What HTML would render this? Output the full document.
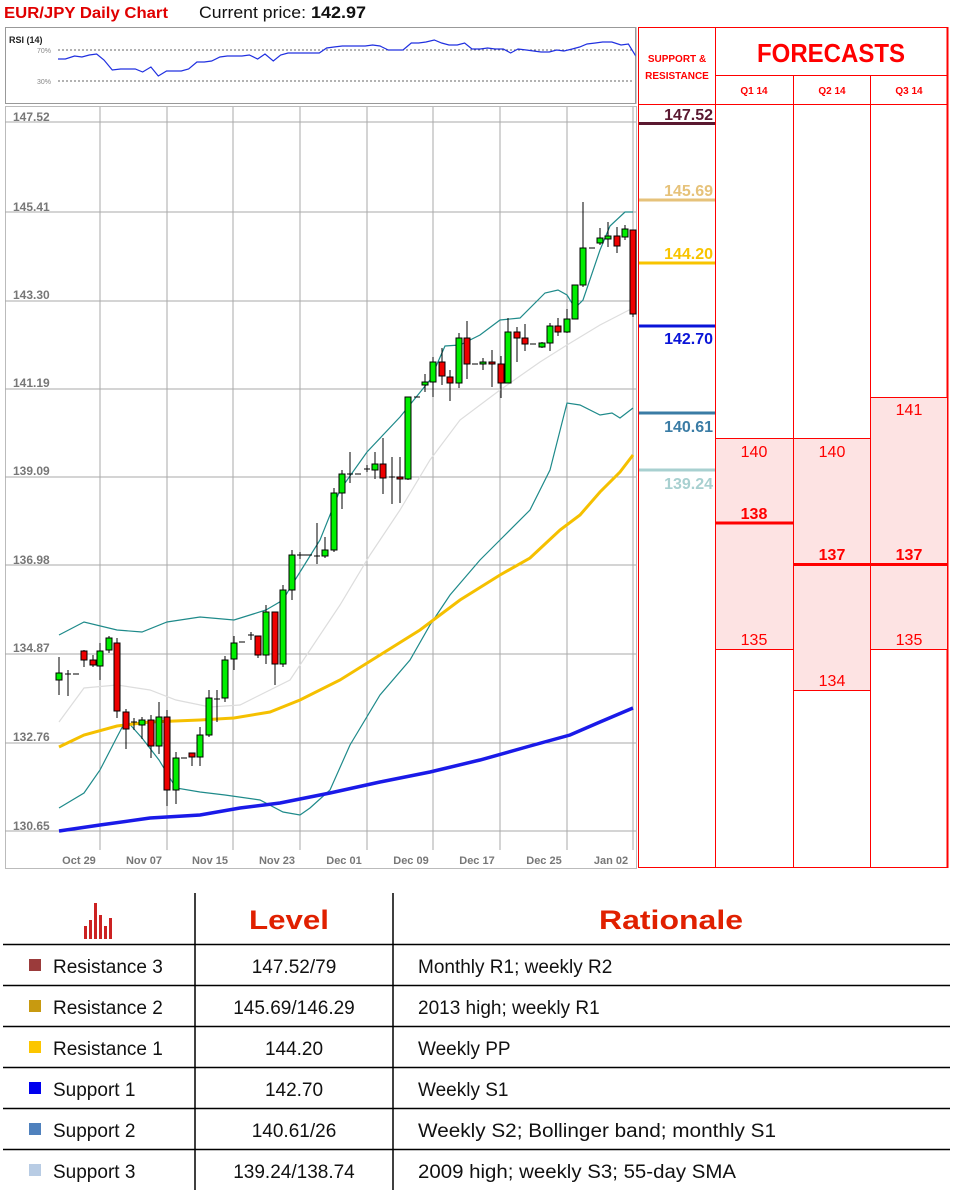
<!DOCTYPE html>
<html><head><meta charset="utf-8"><style>
html,body{margin:0;padding:0;background:#fff;width:954px;height:1193px;overflow:hidden}
svg{display:block}
text{font-family:"Liberation Sans",sans-serif}
</style></head><body>
<svg width="954" height="1193" viewBox="0 0 954 1193" xmlns="http://www.w3.org/2000/svg">
<text x="4" y="18" font-size="16" font-weight="bold" fill="#e00000" textLength="164" lengthAdjust="spacingAndGlyphs">EUR/JPY Daily Chart</text>
<text x="199" y="18" font-size="17" fill="#111" textLength="107" lengthAdjust="spacingAndGlyphs">Current price:</text>
<text x="311" y="18" font-size="17" font-weight="bold" fill="#111" textLength="55" lengthAdjust="spacingAndGlyphs">142.97</text>

<!-- RSI -->
<rect x="5.5" y="27.5" width="630" height="76" fill="#fff" stroke="#999"/>
<text x="9" y="43" font-size="9" font-weight="bold" fill="#222">RSI (14)</text>
<text x="37" y="53" font-size="7" fill="#888">70%</text>
<text x="37" y="84" font-size="7" fill="#888">30%</text>
<line x1="58" y1="50" x2="634" y2="50" stroke="#666" stroke-dasharray="2,2"/>
<line x1="58" y1="81" x2="634" y2="81" stroke="#666" stroke-dasharray="2,2"/>
<g transform="translate(4.64,0) scale(0.92,1)">
<polyline fill="none" stroke="#2030e0" stroke-width="1.2" vector-effect="non-scaling-stroke" points="58,59 66,59 76,56 84,57 92,55 100,54 108,60 117,70 126,69 134,69 142,69 150,72 159,67 167,76 176,71 184,71 192,71 200,69 209,62 217,62 225,61 234,57 242,56 251,56 258,56 266,55 275,59 283,54 292,61 300,55 308,53 317,53 325,53 334,53 342,53 350,48 358,47 367,46 375,46 383,46 392,46 400,45 408,46 417,50 425,50 433,50 442,43 450,43 458,42 467,40 475,43 483,45 492,45 500,43 508,49 517,49 525,48 533,49 542,49 550,53 558,49 567,50 575,51 583,52 592,52 600,50 608,51 617,49 625,47 633,44 642,43 650,42 660,42 670,45 678,44 686,56"/>
</g>
<line x1="636" y1="27" x2="636" y2="104" stroke="#999"/>

<!-- main chart -->
<rect x="5.5" y="106.5" width="631" height="762" fill="#fff" stroke="#bbb"/>
<g stroke="#aaa" stroke-width="1">
<line x1="100" y1="107" x2="100" y2="850"/><line x1="167" y1="107" x2="167" y2="850"/><line x1="233" y1="107" x2="233" y2="850"/><line x1="300" y1="107" x2="300" y2="850"/><line x1="367" y1="107" x2="367" y2="850"/><line x1="433" y1="107" x2="433" y2="850"/><line x1="500" y1="107" x2="500" y2="850"/><line x1="567" y1="107" x2="567" y2="850"/><line x1="633" y1="107" x2="633" y2="850"/>
<line x1="5" y1="122" x2="636" y2="122"/><line x1="5" y1="212" x2="636" y2="212"/><line x1="5" y1="301" x2="636" y2="301"/><line x1="5" y1="389" x2="636" y2="389"/><line x1="5" y1="477" x2="636" y2="477"/><line x1="5" y1="565" x2="636" y2="565"/><line x1="5" y1="654" x2="636" y2="654"/><line x1="5" y1="743" x2="636" y2="743"/><line x1="5" y1="831" x2="636" y2="831"/>
</g>
<g font-size="12" font-weight="bold" fill="#777">
<text x="13" y="121">147.52</text><text x="13" y="211">145.41</text><text x="13" y="299">143.30</text><text x="13" y="387">141.19</text><text x="13" y="475">139.09</text><text x="13" y="564">136.98</text><text x="13" y="652">134.87</text><text x="13" y="741">132.76</text><text x="13" y="830">130.65</text>
</g>
<g font-size="11" font-weight="bold" fill="#777" text-anchor="middle">
<text x="79" y="864">Oct 29</text><text x="144" y="864">Nov 07</text><text x="210" y="864">Nov 15</text><text x="277" y="864">Nov 23</text><text x="344" y="864">Dec 01</text><text x="411" y="864">Dec 09</text><text x="477" y="864">Dec 17</text><text x="544" y="864">Dec 25</text><text x="611" y="864">Jan 02</text>
</g>

<!-- indicator lines -->
<polyline fill="none" stroke="#ddd" stroke-width="1.2" points="59,722 84,688 117,685 150,690 176,700 210,707 240,705 270,690 290,680 310,650 340,605 370,555 400,510 430,460 460,420 500,390 540,362 567,345 600,325 633,308"/>
<polyline fill="none" stroke="#1e8a8a" stroke-width="1.2" points="59,635 84,622 117,630 142,632 167,622 200,617 234,620 266,610 283,600 290,588 300,572 320,540 340,490 367,452 400,417 430,380 445,346 460,345 480,335 500,320 520,318 545,293 558,290 567,295 575,308 583,300 600,250 610,226 625,212 633,212"/>
<polyline fill="none" stroke="#1e8a8a" stroke-width="1.2" points="59,808 84,793 100,770 117,737 126,720 142,738 159,760 176,788 200,792 225,795 260,800 283,812 300,815 310,808 330,790 350,745 380,695 410,660 430,625 450,595 480,560 500,540 530,510 550,470 567,403 580,405 600,415 612,413 620,418 633,408"/>
<polyline fill="none" stroke="#f5c000" stroke-width="3" points="59,747 84,735 117,726 150,722 200,720 234,718 270,712 300,700 340,680 380,655 420,630 460,600 500,575 530,558 560,530 580,515 600,492 620,472 633,455"/>
<polyline fill="none" stroke="#1a1ae8" stroke-width="3.5" points="59,831 100,825 150,818 200,815 240,808 280,803 330,793 380,782 430,772 480,760 530,746 570,735 600,722 633,708"/>

<!-- candles -->
<g stroke="#000" stroke-width="1">
<line x1="59" y1="657" x2="59" y2="695"/><rect x="56" y="673" width="6" height="7" fill="#0e0"/>
<line x1="68" y1="670" x2="68" y2="696"/><line x1="65" y1="674" x2="71" y2="674"/>
<line x1="73" y1="674" x2="79" y2="674"/>
<line x1="84" y1="650" x2="84" y2="667"/><rect x="81" y="651" width="6" height="9" fill="#e00"/>
<line x1="93" y1="655" x2="93" y2="667"/><rect x="90" y="660" width="6" height="5" fill="#e00"/>
<line x1="100" y1="643" x2="100" y2="680"/><rect x="97" y="651" width="6" height="15" fill="#0e0"/>
<line x1="109" y1="636" x2="109" y2="653"/><rect x="106" y="638" width="6" height="12" fill="#0e0"/>
<line x1="117" y1="638" x2="117" y2="718"/><rect x="114" y="643" width="6" height="68" fill="#e00"/>
<line x1="126" y1="709" x2="126" y2="749"/><rect x="123" y="712" width="6" height="17" fill="#e00"/>
<line x1="134" y1="718" x2="134" y2="730"/><line x1="131" y1="722" x2="137" y2="722"/>
<line x1="142" y1="717" x2="142" y2="739"/><rect x="139" y="720" width="6" height="5" fill="#0e0"/>
<line x1="151" y1="715" x2="151" y2="758"/><rect x="148" y="720" width="6" height="26" fill="#e00"/>
<line x1="159" y1="702" x2="159" y2="754"/><rect x="156" y="717" width="6" height="29" fill="#0e0"/>
<line x1="167" y1="710" x2="167" y2="806"/><rect x="164" y="717" width="6" height="73" fill="#e00"/>
<line x1="176" y1="752" x2="176" y2="804"/><rect x="173" y="758" width="6" height="32" fill="#0e0"/>
<line x1="181" y1="758" x2="187" y2="758"/>
<line x1="192" y1="753" x2="192" y2="766"/><rect x="189" y="753" width="6" height="4" fill="#e00"/>
<line x1="200" y1="727" x2="200" y2="766"/><rect x="197" y="735" width="6" height="22" fill="#0e0"/>
<line x1="209" y1="690" x2="209" y2="737"/><rect x="206" y="698" width="6" height="37" fill="#0e0"/>
<line x1="217" y1="690" x2="217" y2="722"/><line x1="214" y1="699" x2="220" y2="699"/>
<line x1="225" y1="656" x2="225" y2="702"/><rect x="222" y="660" width="6" height="38" fill="#0e0"/>
<line x1="234" y1="636" x2="234" y2="670"/><rect x="231" y="643" width="6" height="16" fill="#0e0"/>
<line x1="239" y1="642" x2="245" y2="642"/>
<line x1="251" y1="632" x2="251" y2="640"/><line x1="248" y1="635" x2="254" y2="635"/>
<line x1="258" y1="636" x2="258" y2="658"/><rect x="255" y="636" width="6" height="19" fill="#e00"/>
<line x1="266" y1="605" x2="266" y2="664"/><rect x="263" y="612" width="6" height="43" fill="#0e0"/>
<line x1="275" y1="612" x2="275" y2="685"/><rect x="272" y="612" width="6" height="52" fill="#e00"/>
<line x1="283" y1="585" x2="283" y2="667"/><rect x="280" y="590" width="6" height="74" fill="#0e0"/>
<line x1="292" y1="550" x2="292" y2="600"/><rect x="289" y="555" width="6" height="35" fill="#0e0"/>
<line x1="300" y1="552" x2="300" y2="559"/><line x1="297" y1="555" x2="312" y2="555"/>
<line x1="317" y1="523" x2="317" y2="564"/><line x1="314" y1="556" x2="320" y2="556"/>
<line x1="325" y1="537" x2="325" y2="558"/><rect x="322" y="550" width="6" height="6" fill="#0e0"/>
<line x1="334" y1="488" x2="334" y2="552"/><rect x="331" y="493" width="6" height="57" fill="#0e0"/>
<line x1="342" y1="470" x2="342" y2="509"/><rect x="339" y="474" width="6" height="19" fill="#0e0"/>
<line x1="350" y1="452" x2="350" y2="483"/><line x1="347" y1="474" x2="353" y2="474"/>
<line x1="355" y1="474" x2="361" y2="474"/>
<line x1="367" y1="465" x2="367" y2="472"/><line x1="364" y1="469" x2="370" y2="469"/>
<line x1="375" y1="452" x2="375" y2="479"/><rect x="372" y="464" width="6" height="6" fill="#0e0"/>
<line x1="383" y1="438" x2="383" y2="494"/><rect x="380" y="464" width="6" height="14" fill="#e00"/>
<line x1="392" y1="457" x2="392" y2="504"/><line x1="389" y1="477" x2="395" y2="477"/>
<line x1="400" y1="457" x2="400" y2="503"/><rect x="397" y="477" width="6" height="2" fill="#e00"/>
<line x1="408" y1="397" x2="408" y2="480"/><rect x="405" y="397" width="6" height="82" fill="#0e0"/>
<line x1="414" y1="397" x2="420" y2="397"/>
<line x1="425" y1="374" x2="425" y2="392"/><rect x="422" y="382" width="6" height="3" fill="#0e0"/>
<line x1="433" y1="357" x2="433" y2="397"/><rect x="430" y="362" width="6" height="20" fill="#0e0"/>
<line x1="442" y1="348" x2="442" y2="385"/><rect x="439" y="362" width="6" height="14" fill="#e00"/>
<line x1="450" y1="370" x2="450" y2="401"/><rect x="447" y="377" width="6" height="6" fill="#e00"/>
<line x1="459" y1="333" x2="459" y2="388"/><rect x="456" y="338" width="6" height="45" fill="#0e0"/>
<line x1="467" y1="321" x2="467" y2="379"/><rect x="464" y="338" width="6" height="26" fill="#e00"/>
<line x1="472" y1="364" x2="478" y2="364"/>
<line x1="483" y1="358" x2="483" y2="370"/><rect x="480" y="362" width="6" height="2" fill="#0e0"/>
<line x1="492" y1="350" x2="492" y2="387"/><rect x="489" y="362" width="6" height="2" fill="#e00"/>
<line x1="501" y1="356" x2="501" y2="398"/><rect x="498" y="364" width="6" height="19" fill="#e00"/>
<line x1="508" y1="318" x2="508" y2="383"/><rect x="505" y="332" width="6" height="51" fill="#0e0"/>
<line x1="517" y1="327" x2="517" y2="362"/><rect x="514" y="332" width="6" height="6" fill="#e00"/>
<line x1="525" y1="324" x2="525" y2="351"/><rect x="522" y="338" width="6" height="6" fill="#e00"/>
<line x1="530" y1="344" x2="536" y2="344"/>
<line x1="542" y1="342" x2="542" y2="348"/><rect x="539" y="343" width="6" height="4" fill="#0e0"/>
<line x1="550" y1="323" x2="550" y2="351"/><rect x="547" y="326" width="6" height="17" fill="#0e0"/>
<line x1="558" y1="318" x2="558" y2="336"/><rect x="555" y="326" width="6" height="6" fill="#e00"/>
<line x1="567" y1="309" x2="567" y2="333"/><rect x="564" y="319" width="6" height="13" fill="#0e0"/>
<line x1="575" y1="285" x2="575" y2="319"/><rect x="572" y="285" width="6" height="34" fill="#0e0"/>
<line x1="583" y1="202" x2="583" y2="287"/><rect x="580" y="248" width="6" height="37" fill="#0e0"/>
<line x1="589" y1="248" x2="595" y2="248"/>
<line x1="600" y1="228" x2="600" y2="245"/><rect x="597" y="238" width="6" height="5" fill="#0e0"/>
<line x1="608" y1="222" x2="608" y2="247"/><rect x="605" y="236" width="6" height="3" fill="#0e0"/>
<line x1="617" y1="227" x2="617" y2="253"/><rect x="614" y="236" width="6" height="10" fill="#e00"/>
<line x1="625" y1="225" x2="625" y2="240"/><rect x="622" y="229" width="6" height="8" fill="#0e0"/>
<line x1="633" y1="230" x2="633" y2="317"/><rect x="630" y="230" width="6" height="84" fill="#e00"/>
</g>

<!-- right panel -->
<g fill="none" stroke="#f00" stroke-width="1">
<rect x="638.5" y="27.5" width="309" height="840"/>
<line x1="715.5" y1="27" x2="715.5" y2="868"/>
<line x1="715" y1="75.5" x2="948" y2="75.5"/>
<line x1="638" y1="104.5" x2="948" y2="104.5"/>
<line x1="793.5" y1="75" x2="793.5" y2="868"/>
<line x1="870.5" y1="75" x2="870.5" y2="868"/>
</g>
<line x1="947.5" y1="27" x2="947.5" y2="868" stroke="#f00" stroke-width="2"/>
<g fill="#f00" font-weight="bold" text-anchor="middle">
<text x="677" y="62" font-size="10">SUPPORT &amp;</text>
<text x="677" y="79" font-size="10">RESISTANCE</text>
<text x="831" y="62" font-size="26" textLength="148" lengthAdjust="spacingAndGlyphs">FORECASTS</text>
<text x="754" y="94" font-size="10">Q1 14</text>
<text x="832" y="94" font-size="10">Q2 14</text>
<text x="909" y="94" font-size="10">Q3 14</text>
</g>
<!-- forecast boxes -->
<g fill="#fde3e3" stroke="#f00" stroke-width="1">
<rect x="715.5" y="438.5" width="78" height="211"/>
<rect x="793.5" y="438.5" width="77" height="252"/>
<rect x="870.5" y="397.5" width="77" height="252"/>
</g>
<line x1="716" y1="523" x2="793" y2="523" stroke="#f00" stroke-width="3"/>
<line x1="794" y1="564.5" x2="947" y2="564.5" stroke="#f00" stroke-width="3"/>
<g fill="#f00" font-size="16" text-anchor="middle">
<text x="754" y="457">140</text><text x="832" y="457">140</text><text x="909" y="415">141</text>
<text x="754" y="519" font-weight="bold">138</text><text x="832" y="560" font-weight="bold">137</text><text x="909" y="560" font-weight="bold">137</text>
<text x="754" y="645">135</text><text x="832" y="686">134</text><text x="909" y="645">135</text>
</g>
<!-- S&R levels -->
<line x1="639" y1="123.5" x2="715" y2="123.5" stroke="#5a1830" stroke-width="3"/>
<line x1="639" y1="200" x2="715" y2="200" stroke="#e6c27a" stroke-width="3"/>
<line x1="639" y1="263" x2="715" y2="263" stroke="#f8c400" stroke-width="3"/>
<line x1="639" y1="326" x2="715" y2="326" stroke="#0a14d8" stroke-width="3"/>
<line x1="639" y1="413" x2="715" y2="413" stroke="#3a7ca5" stroke-width="3"/>
<line x1="639" y1="470" x2="715" y2="470" stroke="#a8d0d0" stroke-width="3"/>
<g font-size="16" font-weight="bold" text-anchor="end">
<text x="713" y="120" fill="#5a1830">147.52</text>
<text x="713" y="196" fill="#e6c27a">145.69</text>
<text x="713" y="259" fill="#f8c400">144.20</text>
<text x="713" y="344" fill="#0a14d8">142.70</text>
<text x="713" y="432" fill="#3a7ca5">140.61</text>
<text x="713" y="489" fill="#a8d0d0">139.24</text>
</g>

<!-- table -->
<g stroke="#000" stroke-width="1.5">
<line x1="195" y1="893" x2="195" y2="1190"/>
<line x1="393" y1="893" x2="393" y2="1190"/>
<line x1="3" y1="944.5" x2="950" y2="944.5"/>
<line x1="3" y1="985.5" x2="950" y2="985.5"/>
<line x1="3" y1="1026.5" x2="950" y2="1026.5"/>
<line x1="3" y1="1067.5" x2="950" y2="1067.5"/>
<line x1="3" y1="1108.5" x2="950" y2="1108.5"/>
<line x1="3" y1="1149.5" x2="950" y2="1149.5"/>
</g>
<g fill="#cc2222">
<rect x="84" y="926" width="3" height="13"/><rect x="89" y="920" width="3" height="19"/><rect x="94" y="903" width="3" height="36"/><rect x="99" y="915" width="3" height="24"/><rect x="104" y="926" width="3" height="13"/><rect x="109" y="918" width="3" height="21"/>
</g>
<g fill="#e02000" font-weight="bold" font-size="27" text-anchor="middle">
<text x="289" y="929" textLength="80" lengthAdjust="spacingAndGlyphs">Level</text>
<text x="671" y="929" textLength="144" lengthAdjust="spacingAndGlyphs">Rationale</text>
</g>
<rect x="29" y="959" width="12" height="12" fill="#9b3b3b"/>
<rect x="29" y="1000" width="12" height="12" fill="#c89a10"/>
<rect x="29" y="1041" width="12" height="12" fill="#fcc600"/>
<rect x="29" y="1082" width="12" height="12" fill="#0000ee"/>
<rect x="29" y="1123" width="12" height="12" fill="#4f81bd"/>
<rect x="29" y="1164" width="12" height="12" fill="#b8cce4"/>
<g font-size="19" fill="#111">
<text x="53" y="973">Resistance 3</text>
<text x="53" y="1014">Resistance 2</text>
<text x="53" y="1055">Resistance 1</text>
<text x="53" y="1096">Support 1</text>
<text x="53" y="1137">Support 2</text>
<text x="53" y="1178">Support 3</text>
</g>
<g font-size="19" fill="#111" text-anchor="middle">
<text x="294" y="973">147.52/79</text>
<text x="294" y="1014">145.69/146.29</text>
<text x="294" y="1055">144.20</text>
<text x="294" y="1096">142.70</text>
<text x="294" y="1137">140.61/26</text>
<text x="294" y="1178">139.24/138.74</text>
</g>
<g font-size="19" fill="#111">
<text x="418" y="973">Monthly R1; weekly R2</text>
<text x="418" y="1014">2013 high; weekly R1</text>
<text x="418" y="1055">Weekly PP</text>
<text x="418" y="1096">Weekly S1</text>
<text x="418" y="1137" textLength="358" lengthAdjust="spacingAndGlyphs">Weekly S2; Bollinger band; monthly S1</text>
<text x="418" y="1178" textLength="318" lengthAdjust="spacingAndGlyphs">2009 high; weekly S3; 55-day SMA</text>
</g>
</svg>
</body></html>
